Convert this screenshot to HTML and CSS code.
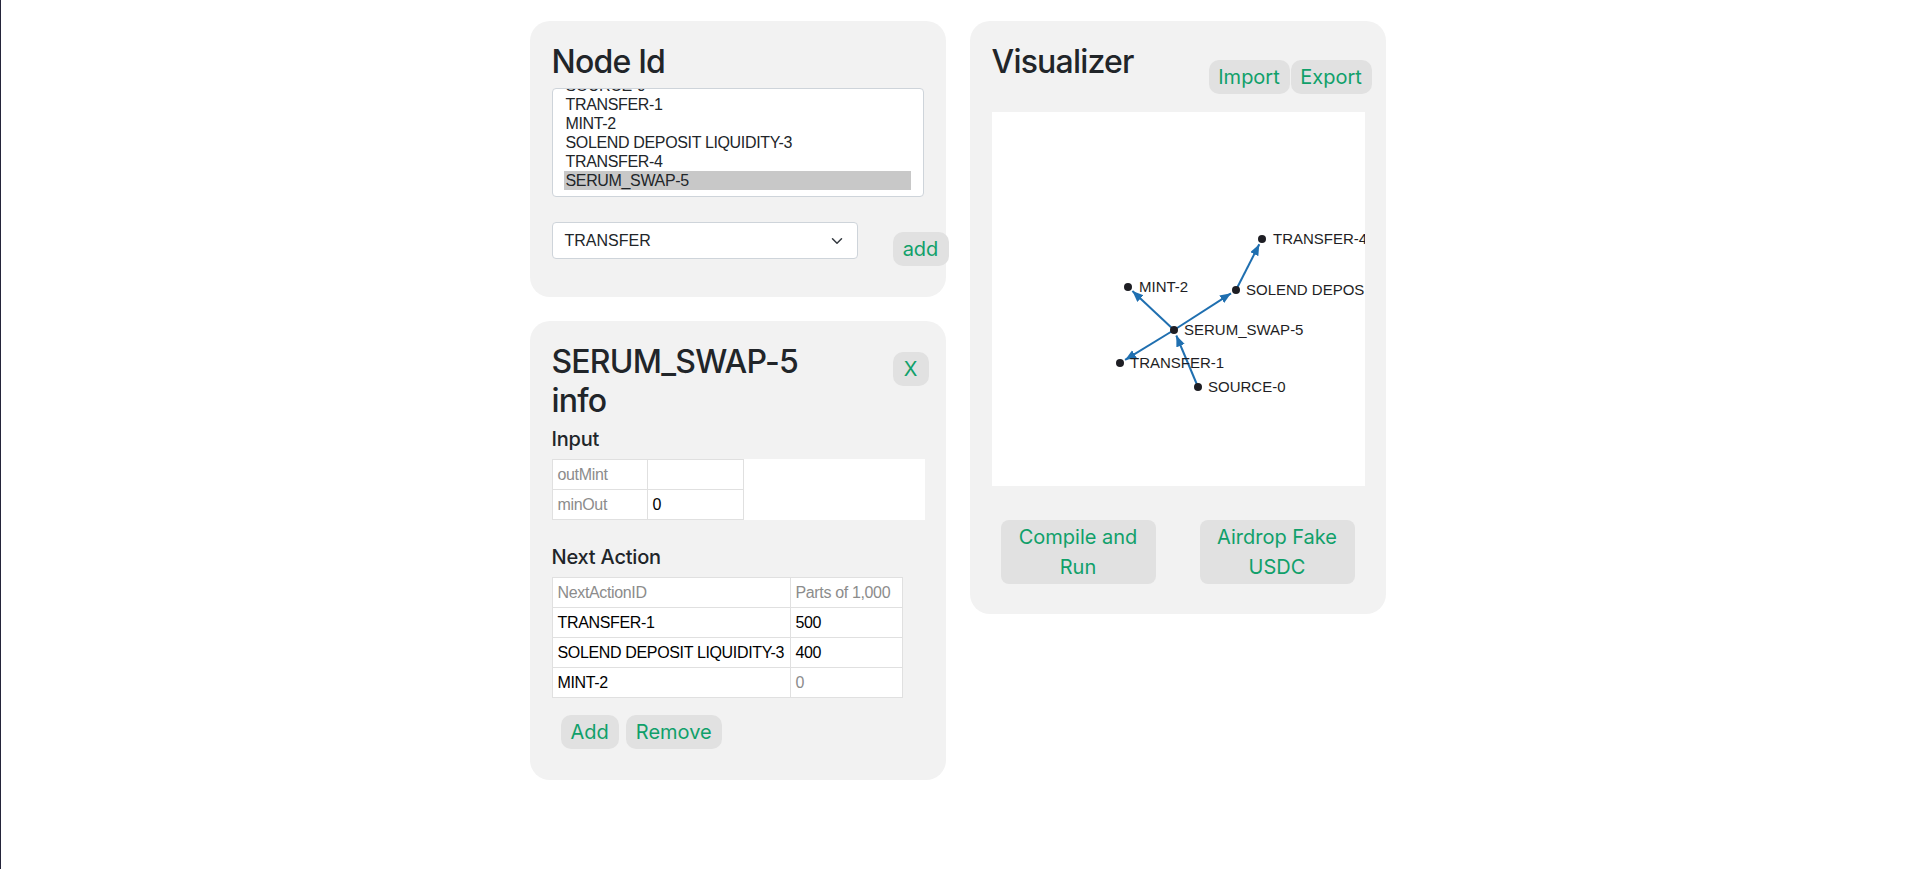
FILE: index.html
```html
<!DOCTYPE html>
<html lang="en">
<head>
<meta charset="utf-8">
<title>Node Builder</title>
<link rel="stylesheet" href="styles.css">
</head>
<body>
<div class="page">
  <div class="column">
    <section class="panel panel-nodes">
      <h2 class="title">Node Id</h2>
      <div class="listbox">
        <ul class="options">
          <li>SOURCE-0</li>
          <li>TRANSFER-1</li>
          <li>MINT-2</li>
          <li>SOLEND DEPOSIT LIQUIDITY-3</li>
          <li>TRANSFER-4</li>
          <li class="selected">SERUM_SWAP-5</li>
        </ul>
      </div>
      <div class="add-row">
        <div class="select">
          <span>TRANSFER</span>
          <svg class="chevron" width="16" height="12" viewBox="0 0 16 16"><path d="M2 5l6 6 6-6" fill="none" stroke="#343a40" stroke-width="2" stroke-linecap="round" stroke-linejoin="round"/></svg>
        </div>
        <button class="btn btn-add">add</button>
      </div>
    </section>

    <section class="panel panel-info">
      <div class="info-head">
        <h2 class="title info-title">SERUM_SWAP-5 info</h2>
        <button class="btn btn-close">X</button>
      </div>
      <h5 class="subtitle">Input</h5>
      <div class="input-wrap">
        <table class="grid">
          <tr><td class="key k-in">outMint</td><td class="val v-in"></td></tr>
          <tr><td class="key k-in">minOut</td><td class="val v-in">0</td></tr>
        </table>
      </div>
      <h5 class="subtitle">Next Action</h5>
      <table class="grid next-grid">
        <tr><td class="key k-next">NextActionID</td><td class="key v-next">Parts of 1,000</td></tr>
        <tr><td class="val">TRANSFER-1</td><td class="val">500</td></tr>
        <tr><td class="val">SOLEND DEPOSIT LIQUIDITY-3</td><td class="val">400</td></tr>
        <tr><td class="val">MINT-2</td><td class="key">0</td></tr>
      </table>
      <div class="action-row">
        <button class="btn">Add</button>
        <button class="btn">Remove</button>
      </div>
    </section>
  </div>

  <div class="column">
    <section class="panel panel-vis">
      <div class="vis-head">
        <h2 class="title">Visualizer</h2>
        <div class="btn-group">
          <button class="btn">Import</button>
          <button class="btn">Export</button>
        </div>
      </div>
      <div class="canvas">
        <svg width="373" height="374" viewBox="0 0 373 374">
          <defs>
            <marker id="arrow" markerUnits="userSpaceOnUse" markerWidth="12" markerHeight="10" refX="11" refY="4.5" orient="auto">
              <path d="M0,0 L11,4.5 L0,9 Z" fill="#1f6fb0"/>
            </marker>
          </defs>
          <g stroke="#1f6fb0" stroke-width="2" fill="none">
            <line x1="182" y1="218" x2="140.4" y2="179.1" marker-end="url(#arrow)"/>
            <line x1="182" y1="218" x2="239" y2="181.3" marker-end="url(#arrow)"/>
            <line x1="244" y1="178" x2="267.3" y2="132.3" marker-end="url(#arrow)"/>
            <line x1="182" y1="218" x2="133.1" y2="247.9" marker-end="url(#arrow)"/>
            <line x1="206" y1="275" x2="184.3" y2="223.5" marker-end="url(#arrow)"/>
          </g>
          <g fill="#1e1e24">
            <circle cx="270" cy="127" r="4"/>
            <circle cx="136" cy="175" r="4"/>
            <circle cx="244" cy="178" r="4"/>
            <circle cx="182" cy="218" r="4"/>
            <circle cx="128" cy="251" r="4"/>
            <circle cx="206" cy="275" r="4"/>
          </g>
          <g class="labels">
            <text x="281" y="132">TRANSFER-4</text>
            <text x="147" y="180">MINT-2</text>
            <text x="254" y="183">SOLEND DEPOSIT LIQUIDITY-3</text>
            <text x="192" y="223">SERUM_SWAP-5</text>
            <text x="138" y="256">TRANSFER-1</text>
            <text x="216" y="280">SOURCE-0</text>
          </g>
        </svg>
      </div>
      <div class="run-row">
        <button class="btn btn-wide">Compile and Run</button>
        <button class="btn btn-wide">Airdrop Fake USDC</button>
      </div>
    </section>
  </div>
</div>
</body>
</html>
```

FILE: styles.css
```css
html, body {
  margin: 0;
  padding: 0;
  background: #ffffff;
}

body {
  min-height: 100vh;
  box-shadow: inset 1px 0 0 #24243a;
  font-family: Inter, "Noto Sans", sans-serif;
  color: #212529;
}

.page {
  display: flex;
  justify-content: center;
  align-items: flex-start;
  gap: 24px;
  padding-top: 21px;
}

.column {
  display: flex;
  flex-direction: column;
  gap: 24px;
}

.panel {
  width: 416px;
  box-sizing: border-box;
  padding: 22px;
  background: #f2f2f2;
  border-radius: 20px;
}

.title {
  margin: 0 0 7px 0;
  font-size: 32px;
  line-height: 1.2;
  font-weight: 500;
  letter-spacing: -0.8px;
  color: #212529;
}

.subtitle {
  margin: 0 0 8px 0;
  font-size: 20px;
  line-height: 24px;
  font-weight: 500;
  letter-spacing: -0.2px;
  color: #212529;
}

/* listbox */
.listbox {
  height: 109px;
  box-sizing: border-box;
  background: #fff;
  border: 1px solid #ced4da;
  border-radius: 4px;
  overflow: hidden;
}

.options {
  list-style: none;
  margin: -13px 0 0 0;
  padding: 0 12px 0 11px;
  font-family: "Liberation Sans", Arial, sans-serif;
  font-size: 16px;
  letter-spacing: -0.35px;
  color: #212529;
}

.options li {
  height: 19px;
  line-height: 19px;
  padding: 0 2px;
  white-space: nowrap;
}

.options li.selected {
  background: #c8c8c8;
}

/* select row */
.add-row {
  display: flex;
  align-items: flex-start;
  margin: 25px 0 9px 0;
}

.select {
  flex: 0 0 306px;
  height: 37px;
  box-sizing: border-box;
  display: flex;
  align-items: center;
  justify-content: space-between;
  padding: 0 12px 0 12px;
  background: #fff;
  border: 1px solid #ced4da;
  border-radius: 4px;
  font-family: "Liberation Sans", Arial, sans-serif;
  font-size: 16px;
  color: #212529;
}

.chevron {
  display: block;
}

.btn {
  flex-shrink: 0;
  border: 0;
  margin: 0;
  padding: 2px 10px;
  background: #e1e1e1;
  color: #10a06a;
  font-family: Inter, "Noto Sans", sans-serif;
  font-size: 20px;
  line-height: 30px;
  border-radius: 10px;
  cursor: pointer;
}

.btn-add {
  margin-left: 35px;
  margin-top: 10px;
  width: 56px;
  padding: 2px 0;
}

/* info */
.info-head {
  display: flex;
  align-items: flex-start;
}

.info-title {
  max-width: 290px;
}

.btn-close {
  margin-left: auto;
  margin-right: -5px;
  margin-top: 9px;
  width: 36px;
  padding: 2px 0;
}

.input-wrap {
  width: 373px;
  background: #fff;
  margin-bottom: 25px;
}

.grid {
  border-collapse: collapse;
  font-family: "Liberation Sans", Arial, sans-serif;
  font-size: 16px;
  letter-spacing: -0.35px;
}

.grid td {
  height: 30px;
  box-sizing: border-box;
  padding: 0 5px;
  border: 1px solid #e0e0e0;
  background: #fff;
  white-space: nowrap;
  vertical-align: middle;
}

.grid .key {
  color: #8c8c8c;
}

.grid .val {
  color: #000;
}

.k-in { width: 95px; }
.v-in { width: 96px; }
.k-next { width: 238px; }
.v-next { width: 112px; }

.action-row {
  display: flex;
  gap: 7px;
  padding-left: 9px;
  margin: 17px 0 9px 0;
}

/* visualizer */
.vis-head {
  display: flex;
  justify-content: space-between;
  align-items: flex-start;
  margin-bottom: 18px;
}

.vis-head .title {
  margin: 0;
}

.btn-group {
  display: flex;
  gap: 1px;
  margin-top: 17px;
  margin-right: -8px;
}

.btn-group .btn {
  width: 81px;
  padding: 2px 0;
}

.canvas {
  width: 373px;
  height: 374px;
  background: #fff;
}

.canvas svg {
  display: block;
}

.labels text {
  font-family: "Liberation Sans", Arial, sans-serif;
  font-size: 15px;
  fill: #1e1e24;
}

.run-row {
  display: flex;
  justify-content: space-between;
  padding: 0 9px;
  margin: 34px 0 8px 0;
}

.btn-wide {
  width: 155px;
  padding: 2px 10px;
  border-radius: 8px;
  text-align: center;
}
```
